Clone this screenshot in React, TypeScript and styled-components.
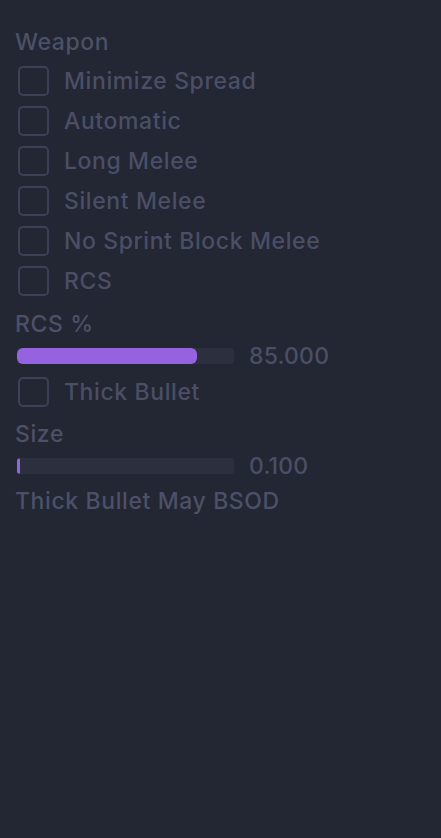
import React from "react";
import styled, { createGlobalStyle } from "styled-components";

const Global = createGlobalStyle`
  html, body { margin: 0; padding: 0; background: #232633; }
  body { font-family: Inter, "Noto Sans", sans-serif; }
`;

const Panel = styled.div`
  width: 441px;
  height: 838px;
  box-sizing: border-box;
  background: #232633;
  padding: 26px 15px 0 15px;
  display: flex;
  flex-direction: column;
`;

const Label = styled.div<{ $mt?: number; $mb?: number }>`
  font-size: 23px;
  font-weight: 500;
  letter-spacing: 0.6px;
  color: #4c5168;
  height: 32px;
  margin-top: ${(p) => p.$mt ?? 0}px;
  margin-bottom: ${(p) => p.$mb ?? 0}px;
  display: flex;
  align-items: center;
`;

const Row = styled.label`
  display: flex;
  align-items: center;
  height: 40px;
  gap: 15px;
  padding-left: 3px;
`;

const Box = styled.span`
  width: 27px;
  height: 26px;
  border: 2px solid #3d4156;
  border-radius: 5px;
  flex: none;
`;

const RowText = styled.span`
  font-size: 23px;
  font-weight: 500;
  letter-spacing: 0.6px;
  color: #4a4f66;
`;

const SliderRow = styled.div`
  display: flex;
  align-items: center;
  height: 32px;
  gap: 15px;
  padding-left: 2px;
`;

const Track = styled.div`
  width: 217px;
  height: 16px;
  background: #2b2f3e;
  border-radius: 3px;
  position: relative;
  overflow: hidden;
`;

const Fill = styled.div`
  height: 100%;
  background: #9563e0;
  border-radius: 6px;
`;

const Value = styled.span`
  font-size: 23px;
  font-weight: 500;
  letter-spacing: 0.2px;
  color: #4a4f66;
`;

const items = [
  "Minimize Spread",
  "Automatic",
  "Long Melee",
  "Silent Melee",
  "No Sprint Block Melee",
  "RCS",
];

export default function App() {
  return (
    <>
      <Global />
      <Panel>
        <Label $mb={3}>Weapon</Label>
        {items.map((t) => (
          <Row key={t}>
            <Box />
            <RowText>{t}</RowText>
          </Row>
        ))}
        <Label $mt={7}>RCS %</Label>
        <SliderRow>
          <Track>
            <Fill style={{ width: "83%" }} />
          </Track>
          <Value>85.000</Value>
        </SliderRow>
        <Row>
          <Box />
          <RowText>Thick Bullet</RowText>
        </Row>
        <Label $mt={6}>Size</Label>
        <SliderRow>
          <Track>
            <Fill style={{ width: "3px" }} />
          </Track>
          <Value>0.100</Value>
        </SliderRow>
        <Label $mt={3}>Thick Bullet May BSOD</Label>
      </Panel>
    </>
  );
}
